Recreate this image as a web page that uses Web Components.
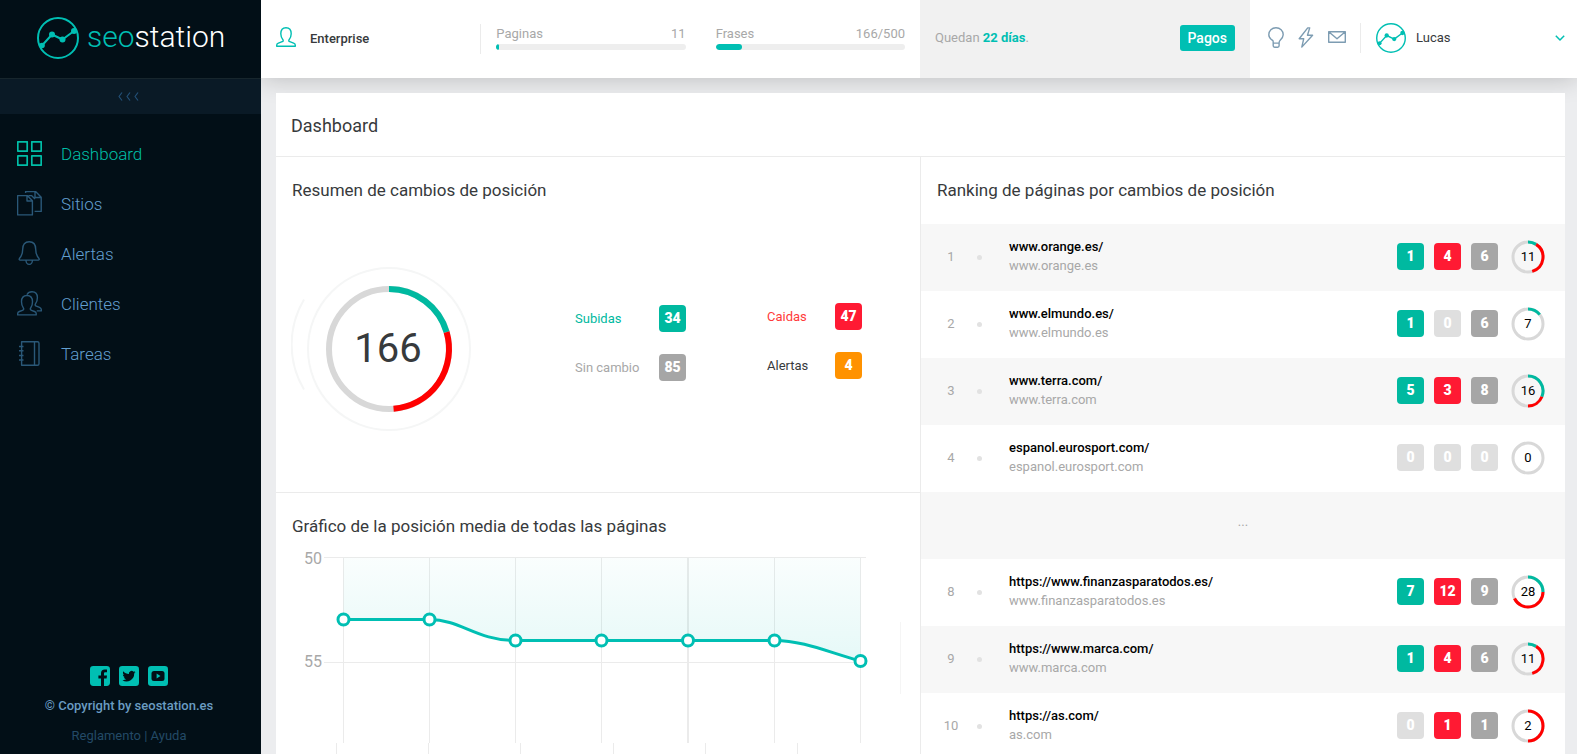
<!DOCTYPE html>
<html lang="es">
<head>
<meta charset="utf-8">
<title>Seostation - Dashboard</title>
<style>
  :root { --teal: #00bfb3; --up: #00b9a0; --down: #ff1a33; --same: #a6a6a6; --alert: #ff9200; --none: #dfdfdf; --ink: #373a3c; --muted: #a8a8a8; --line: #ebebeb; }
  html, body { margin: 0; }
  body { font: 400 13px/20px Roboto, sans-serif; color: var(--ink); background: #ecedef; }
</style>
</head>
<body>
<app-shell>
  <side-bar slot="side"></side-bar>
  <top-bar slot="top"></top-bar>
  <dash-card heading="Dashboard">
    <dash-panel slot="left" heading="Resumen de cambios de posición"><change-summary up="34" down="47" same="85" alerts="4"></change-summary></dash-panel>
    <dash-panel slot="left" heading="Gráfico de la posición media de todas las páginas"><position-chart></position-chart></dash-panel>
    <dash-panel slot="right" heading="Ranking de páginas por cambios de posición"><rank-table></rank-table></dash-panel>
  </dash-card>
</app-shell>

<script>
const USER = 'M.7 19.3h18.6v-1c0-1.1-.7-1.7-1.7-2.1l-3.8-1.5c-1-.4-1.3-1.1-.7-2 1.4-1.7 2.1-3.8 2.1-5.9C15.200 3 13.200.7 10 .7S4.800 3 4.800 6.800c0 2.100.700 4.200 2.100 5.900.600.900.300 1.600-.700 2l-3.800 1.500c-1 .400-1.700 1-1.700 2.100z';
const ICONS = {
  logo: ['0 0 42 42', '<circle cx="21" cy="21" r="20" stroke-width="2"/><path stroke-width="2" d="M5 28.500 15 17.500 25.500 22.500 37 14"/><g fill="currentColor" stroke="none"><circle cx="5" cy="28.500" r="2.800"/><circle cx="15" cy="17.500" r="3"/><circle cx="25.500" cy="22.500" r="3"/><circle cx="37" cy="14" r="3"/></g>'],
  grid: ['0 0 25 25', '<path stroke-width="1.700" d="M.8.800h9.400v9.400H.8zM14.800.800h9.400v9.400h-9.400zM.8 14.800h9.400v9.400H.8zM14.800 14.800h9.400v9.400h-9.400z"/>'],
  files: ['0 0 25 25', '<path d="M.6 4.600h9.600l5.200 5.200v14.100H.6zM10 4.600v5.400h5.400M8.600 2V.6h10l5.600 5.600v14.200h-6.600M18 .8v5.700h6M11.500 4.600h3l3.500 3.500"/>'],
  bell: ['0 0 25 25', '<path d="M12.200.700c-4.300 0-6.500 3-6.500 7.500 0 5.500-1.600 7.300-3.200 9.200-.700.900-.300 1.700.700 1.700h18c1 0 1.400-.800.700-1.700-1.600-1.900-3.200-3.700-3.200-9.200 0-4.500-2.200-7.500-6.500-7.500zM9 19.200c0 2 1.200 4.200 3.200 4.200s3.200-2.200 3.200-4.200"/>'],
  users: ['0 0 25 25', '<path d="M.7 23.900h18.500v-1.300c0-1.200-.7-1.700-1.700-2.100l-3-1.200c-1.600-.6-1.400-1.600-.7-2.500 1.200-1.600 1.700-3 1.700-6.100 0-4-2-6.200-5.500-6.200S4.500 6.700 4.500 10.700c0 3.100.6 4.500 1.800 6.100.6.900.8 1.900-.8 2.500l-3.100 1.200c-1 .4-1.700.9-1.700 2.100zM10 3.500C11 1.600 12.700.700 15 .700c3.500 0 5.400 2.300 5.400 5.900 0 3.100-.6 4.500-1.800 6.100-.6.900-.8 1.900.8 2.500l3.100 1.200c1 .4 1.800.9 1.800 2.100v1.400h-4.500"/>'],
  book: ['0 0 25 25', '<path d="M4.600.700h15.800c1 0 1.600.600 1.600 1.600v20.400c0 1-.6 1.600-1.600 1.600H4.600zM17.500.700v23.600M2 5.500h4.500M2 9.800h4.500M2 14.500h4.500M2 19h4.500"/>'],
  user: ['0 0 20 20', `<path stroke-width="1.400" d="${USER}"/>`],
  bulb: ['0 0 16 21', '<path d="M4.900 13.600C2.700 12.200.8 10.400.8 7.700.8 3.600 3.900.800 8 .800s7.200 2.800 7.200 6.900c0 2.700-1.900 4.500-3.200 5.700-.8.900-.9 1.700-.9 2.700H5.200c0-1 .1-1.700-.3-2.500zM5.200 16.100v2.700c0 1 .6 1.400 1.400 1.400h3.100c.8 0 1.400-.400 1.400-1.400v-2.700z"/>'],
  bolt: ['0 0 16 21', '<path d="M9.700.9 1.200 11.800h4.500L3.800 20.100 14.600 8.300H9.500L11.700.9z"/>'],
  mail: ['0 0 18 12', '<path d="M.7.700h16.600v10.600H.700zM1 1l8 6.800L17 1"/>'],
  chevron: ['0 0 10 6', '<path stroke-width="1.500" d="M.8.800 5 5 9.200.800"/>'],
  collapse: ['0 0 22 9', '<path stroke-width="1.200" d="M4 .5 1 4.500l3 4M12 .5l-3 4 3 4M20 .5l-3 4 3 4"/>'],
  facebook: ['0 0 20 20', '<path stroke="none" fill="currentColor" d="M3.200 0h13.600C18.800 0 20 1.200 20 3.200v13.600c0 2-1.200 3.200-3.200 3.200H14v-7.500h2.600l.4-3h-3V7.600c0-.9.400-1.400 1.400-1.400H17V3.500h-2.200C12.200 3.500 11 4.900 11 7.200v2.300H8.400v3H11V20H3.200C1.200 20 0 18.800 0 16.800V3.200C0 1.200 1.200 0 3.200 0z"/>'],
  twitter: ['0 0 20 20', '<rect width="20" height="20" rx="3.200" fill="currentColor" stroke="none"/><path stroke="none" fill="#020f17" d="M16.500 6.100c-.5.200-1 .4-1.500.4.600-.3 1-.8 1.200-1.400-.5.300-1.100.5-1.700.6a2.700 2.700 0 0 0-4.600 2.400C7.700 8 5.700 7 4.300 5.300c-.7 1.200-.4 2.700.8 3.500-.4 0-.8-.1-1.200-.3 0 1.300.9 2.400 2.100 2.700-.4.100-.8.100-1.200 0 .3 1.100 1.300 1.800 2.500 1.900-1.100.9-2.500 1.200-3.900 1.100a7.700 7.700 0 0 0 11.800-6.700c.5-.4 1-.9 1.300-1.400z"/>'],
  youtube: ['0 0 20 20', '<rect width="20" height="20" rx="3.200" fill="currentColor" stroke="none"/><rect x="3.500" y="5" width="13" height="10" rx="2.500" fill="#020f17" stroke="none"/><path stroke="none" fill="currentColor" d="M8.600 7.600 12.500 10l-3.900 2.400z"/>']
};

function define(name, render) {
  customElements.define(name, class extends HTMLElement {
    connectedCallback() {
      if (this.shadowRoot) return;
      const t = document.createElement('template');
      t.innerHTML = render(this);
      this.attachShadow({ mode: 'open' }).append(t.content.cloneNode(true));
    }
  });
}

define('ui-icon', el => {
  const [box, body] = ICONS[el.getAttribute('name')];
  const [, , w, h] = box.split(' ');
  const size = el.getAttribute('size');
  return `<style>:host{display:block;flex:none}svg{display:block}</style>
  <svg viewBox="${box}" width="${size || w}" height="${size || h}" fill="none" stroke="currentColor" stroke-width="1.400" stroke-linejoin="round" aria-hidden="true">${body}</svg>`;
});

define('app-shell', () => `<style>
  :host{display:grid;grid-template-columns:261px minmax(0,1fr);height:100vh}
  .main{display:flex;flex-direction:column;min-height:0}
  main{flex:1;min-height:0;overflow-y:auto;scrollbar-width:none;padding:15px 12px 15px 15px}
  ::slotted([slot=side]){z-index:1}
</style><slot name="side"></slot><div class="main"><slot name="top"></slot><main><slot></slot></main></div>`);

define('side-bar', () => `<style>
  :host{display:flex;flex-direction:column;background:#020f17;color:#629fd0}
  a{color:inherit;text-decoration:none}
  .brand{display:flex;align-items:center;gap:8px;height:78px;padding:0 37px 2px;box-sizing:border-box;font-size:30px;line-height:40px;font-weight:300;color:#fff}
  .brand ui-icon,.brand b{color:var(--teal);font-weight:300}
  .brand span{padding-bottom:2px}
  button{all:unset;box-sizing:border-box;height:36px;background:#0a1a26;border-top:1px solid #17262d;color:#235078;display:flex;align-items:center;justify-content:center;padding-right:4px;cursor:pointer}
  nav{padding-top:14px;flex:1}
  nav a{display:flex;align-items:center;gap:19px;height:50px;padding-left:17px;font-size:17px;font-weight:300}
  nav span{padding-top:2px}
  nav ui-icon{color:#2a5878}
  nav a.on,nav a.on ui-icon{color:#00bfa8}
  footer{text-align:center;padding:0 3px 8px 0}
  .social{display:flex;justify-content:center;gap:9px;color:var(--teal);margin-bottom:10px}
  p{margin:0 0 10px;font-weight:500;color:#6a9cc2}
  .links{margin:0;font-weight:400;color:#234a66}
</style>
<a class="brand" href="#"><ui-icon name="logo"></ui-icon><span><b>seo</b>station</span></a>
<button type="button" aria-label="Contraer menú"><ui-icon name="collapse"></ui-icon></button>
<nav>${[['grid', 'Dashboard'], ['files', 'Sitios'], ['bell', 'Alertas'], ['users', 'Clientes'], ['book', 'Tareas']]
    .map(([i, t], n) => `<a href="#"${n ? '' : ' class="on" aria-current="page"'}><ui-icon name="${i}"></ui-icon><span>${t}</span></a>`).join('')}</nav>
<footer><div class="social">${['facebook', 'twitter', 'youtube'].map(n => `<a href="#" aria-label="${n}"><ui-icon name="${n}"></ui-icon></a>`).join('')}</div>
<p>© Copyright by seostation.es</p><p class="links"><a href="#">Reglamento</a> | <a href="#">Ayuda</a></p></footer>`);

define('usage-meter', el => {
  const a = n => el.getAttribute(n);
  return `<style>
  :host{display:block;flex:1;padding:0 15px;color:var(--muted)}
  .row{display:flex;justify-content:space-between}
  progress{appearance:none;display:block;width:100%;height:6px;border:0;border-radius:3px;overflow:hidden;background:#eee}
  progress::-webkit-progress-bar{background:#eee}
  progress::-webkit-progress-value{background:var(--teal);border-radius:3px}
</style><div class="row"><label for="m">${a('label')}</label><span>${a('text')}</span></div><progress id="m" max="${a('max')}" value="${a('value')}"></progress>`;
});

define('top-bar', () => `<style>
  :host{display:grid;grid-template-columns:659fr 330fr 327fr;height:78px;flex:none;background:#fff;box-shadow:0 0 24px rgba(0,0,0,.22)}
  div{display:flex;align-items:center;min-width:0;box-sizing:border-box}
  .account{display:grid;grid-template-columns:1fr 1px 2fr}
  .plan{gap:14px;padding-left:15px;font-weight:500;color:var(--ink)}
  .plan ui-icon{color:var(--teal);padding-bottom:4px}
  .meters{padding-bottom:4px}
  .rule{flex:none;width:1px;height:30px;background:var(--line)}
  .pay{justify-content:space-between;padding:0 15px 2px;background:#f1f1f1;color:var(--muted)}
  .pay b{color:var(--teal)}
  button{all:unset;cursor:pointer}
  .pay button{background:var(--teal);color:#fff;font-size:14px;line-height:26px;font-weight:500;padding:0 8px;border-radius:3px}
  .tools{gap:14px;padding:0 12px 2px 18px}
  .tools>button{color:#7d9cb2;padding-bottom:2px}
  .tools .me{display:flex;align-items:center;gap:10px;flex:1;padding:0 0 0 1px;color:var(--ink)}
  .me span{flex:1}
  .me ui-icon{color:var(--teal)}
</style>
<div class="account"><div class="plan"><ui-icon name="user"></ui-icon>Enterprise</div><div class="rule"></div>
<div class="meters"><usage-meter label="Paginas" text="11" max="1000" value="16"></usage-meter><usage-meter label="Frases" text="166/500" max="1000" value="138"></usage-meter></div></div>
<div class="pay"><span>Quedan <b>22 días</b>.</span><button type="button">Pagos</button></div>
<div class="tools"><button type="button" aria-label="Ideas"><ui-icon name="bulb"></ui-icon></button><button type="button" aria-label="Actividad"><ui-icon name="bolt"></ui-icon></button><button type="button" aria-label="Mensajes"><ui-icon name="mail"></ui-icon></button><div class="rule"></div>
<button class="me" type="button" aria-haspopup="menu"><ui-icon name="logo" size="30"></ui-icon><span>Lucas</span><ui-icon name="chevron"></ui-icon></button></div>`);

define('dash-card', el => `<style>
  :host{display:block;background:#fff}
  h1{margin:0;padding:2px 15px 0;font-size:18px;line-height:61px;font-weight:400;border-bottom:1px solid var(--line)}
  .cols{display:grid;grid-template-columns:minmax(0,1fr) 1px minmax(0,1fr)}
  .rule{background:var(--line)}
</style><h1>${el.getAttribute('heading')}</h1><div class="cols"><div><slot name="left"></slot></div><div class="rule"></div><div><slot name="right"></slot></div></div>`);

define('dash-panel', el => `<style>
  :host{display:block}
  :host([slot=left]:first-of-type){border-bottom:1px solid var(--line)}
  h2{margin:0;padding:23px 16px 1px;font-size:17px;line-height:20px;font-weight:400}
</style><h2>${el.getAttribute('heading')}</h2><slot></slot>`);

define('stat-badge', () => `<style>
  :host{display:block;flex:none;width:27px;line-height:27px;border-radius:4px;text-align:center;font-size:14px;font-weight:900;color:#fff;background:var(--none)}
  :host([kind=up]){background:var(--up)}
  :host([kind=down]){background:var(--down)}
  :host([kind=same]){background:var(--same)}
  :host([kind=alert]){background:var(--alert)}
</style><slot></slot>`);

// Ring split clockwise from the top: up, then down, the rest in grey.
function ring(cx, cy, r, w, up, down, total) {
  const arc = (from, to, color) => {
    const p = t => { const a = t * 2 * Math.PI; return (cx + r * Math.sin(a)).toFixed(2) + ' ' + (cy - r * Math.cos(a)).toFixed(2); };
    return to > from ? `<path d="M${p(from)}A${r} ${r} 0 ${to - from > .5 ? 1 : 0} 1 ${p(to)}" stroke="${color}"/>` : '';
  };
  const t = total || 1;
  return `<g fill="none" stroke-width="${w}"><circle cx="${cx}" cy="${cy}" r="${r}" stroke="#d8d8d8"/>${arc(0, up / t, '#00b9a0')}${arc(up / t, (up + down) / t, '#f00')}</g>`;
}

define('ring-total', el => {
  const [u, d, s] = ['up', 'down', 'same'].map(n => +el.getAttribute(n));
  return `<style>:host{display:grid;flex:none;place-items:center;color:#000}svg,span{grid-area:1/1}</style>
  <svg width="34" height="34">${ring(17, 17, 15, 3, u, d, u + d + s)}</svg><span>${u + d + s}</span>`;
});

define('change-summary', el => {
  const [u, d, s, w] = ['up', 'down', 'same', 'alerts'].map(n => +el.getAttribute(n));
  return `<style>
  :host{display:grid;grid-template-columns:299fr 192fr 153fr;height:291px}
  .donut{display:grid;place-items:center start;padding:58px 0 0 15px;align-content:start}
  .donut svg,.donut span{grid-area:1/1}
  .donut span{width:194px;text-align:center;font-size:40px;line-height:48px;font-weight:400}
  .col{display:grid;align-content:start;gap:22px;padding-top:104px}
  .item{display:grid;grid-template-columns:84px 27px;align-items:center}
  .last{padding-top:102px}
  .last .item{grid-template-columns:68px 27px}
</style>
<div class="donut"><svg width="180" height="180">${ring(98, 90, 60, 6, u, d, u + d + s)}<g fill="none" stroke="#f5f6f6" stroke-width="2"><circle cx="98" cy="90" r="81"/><path d="M13 40.500A88 88 0 0 0 13 130.500"/></g></svg><span>${u + d + s}</span></div>
<div class="col"><div class="item" style="color:var(--up)">Subidas<stat-badge kind="up">${u}</stat-badge></div><div class="item" style="color:var(--muted)">Sin cambio<stat-badge kind="same">${s}</stat-badge></div></div>
<div class="col last"><div class="item" style="color:#ff3a3a">Caidas<stat-badge kind="down">${d}</stat-badge></div><div class="item">Alertas<stat-badge kind="alert">${w}</stat-badge></div></div>`;
});

define('position-chart', () => {
  const xs = [67.5, 153.5, 239.5, 325.5, 412, 498.5, 584.5];
  const ys = [82.5, 82.5, 103.5, 103.5, 103.5, 103.5, 124];
  const line = 'M67.500 82.500H153.500C185 82.500 200 103.500 239.500 103.500H498.500C528 103.500 554 116 584.500 124';
  return `<style>:host{display:block}svg{display:block;width:100%;height:auto}text{font-size:16px;fill:var(--muted)}</style>
<svg viewBox="0 0 644 290" role="img" aria-label="Posición media">
  <defs><linearGradient id="g" x2="0" y2="1"><stop stop-color="#00bfb3" stop-opacity=".02"/><stop offset="1" stop-color="#00bfb3" stop-opacity=".1"/></linearGradient></defs>
  <g stroke="#ebebeb" fill="none"><path d="M48 20.500H590M48 125.500H584"/>
  ${xs.map((x, i) => `<path d="M${x} 20V206"${i === 4 ? ' stroke-width="2"' : ''}/>`).join('')}
  ${[60.5, 152.5, 244.5, 337.5, 429.5, 521.5].map(x => `<path d="M${x} 206V250"/>`).join('')}
  <path stroke="#f5f5f5" d="M624.500 85V157"/></g>
  <path d="${line}V20.500H67.500z" fill="url(#g)"/>
  <path d="${line}" fill="none" stroke="#00bfb3" stroke-width="3"/>
  <g fill="#fff" stroke="#00bfb3" stroke-width="3">${xs.map((x, i) => `<circle cx="${x}" cy="${ys[i]}" r="5.500"/>`).join('')}</g>
  <g text-anchor="end"><text x="46" y="27">50</text><text x="46" y="130">55</text></g>
</svg>`;
});

define('rank-table', () => {
  const rows = [[1, 'www.orange.es', '', 1, 4, 6], [2, 'www.elmundo.es', '', 1, 0, 6], [3, 'www.terra.com', '', 5, 3, 8], [4, 'espanol.eurosport.com', '', 0, 0, 0], null,
    [8, 'www.finanzasparatodos.es', 'https://', 7, 12, 9], [9, 'www.marca.com', 'https://', 1, 4, 6], [10, 'as.com', 'https://', 0, 1, 1]];
  const badge = (kind, n) => `<stat-badge${n ? ` kind="${kind}"` : ''}>${n}</stat-badge>`;
  return `<style>
  :host{display:block;margin-top:23px}
  table{width:100%;border-collapse:collapse;table-layout:fixed}
  td{box-sizing:border-box;height:67px;padding:0;color:var(--muted)}
  tr:nth-child(odd){background:#f7f7f7}
  td.n{padding:0 0 2px 14px;text-align:center}
  .d i{display:block;width:5px;height:5px;margin:0 auto;border-radius:50%;background:#e2e2e2}
  td.u{padding:0 0 4px 18px;line-height:19px}
  a{display:block;color:#000;font-weight:500;text-decoration:none}
  td.s{padding-bottom:2px}
  .s div{display:flex;align-items:center;justify-content:flex-end;gap:10px;padding-right:20px}
  ring-total{padding-left:3px}
  td.more{text-align:center;padding-bottom:8px}
</style><table><colgroup><col style="width:46px"><col style="width:24px"><col><col style="width:168px"></colgroup><tbody>${rows.map(r => r
    ? `<tr><td class="n">${r[0]}</td><td class="d"><i></i></td><td class="u"><a href="#">${r[2]}${r[1]}/</a>${r[1]}</td><td class="s"><div>${badge('up', r[3])}${badge('down', r[4])}${badge('same', r[5])}<ring-total up="${r[3]}" down="${r[4]}" same="${r[5]}"></ring-total></div></td></tr>`
    : '<tr><td class="more" colspan="4">...</td></tr>').join('')}</tbody></table>`;
});
</script>
</body>
</html>
